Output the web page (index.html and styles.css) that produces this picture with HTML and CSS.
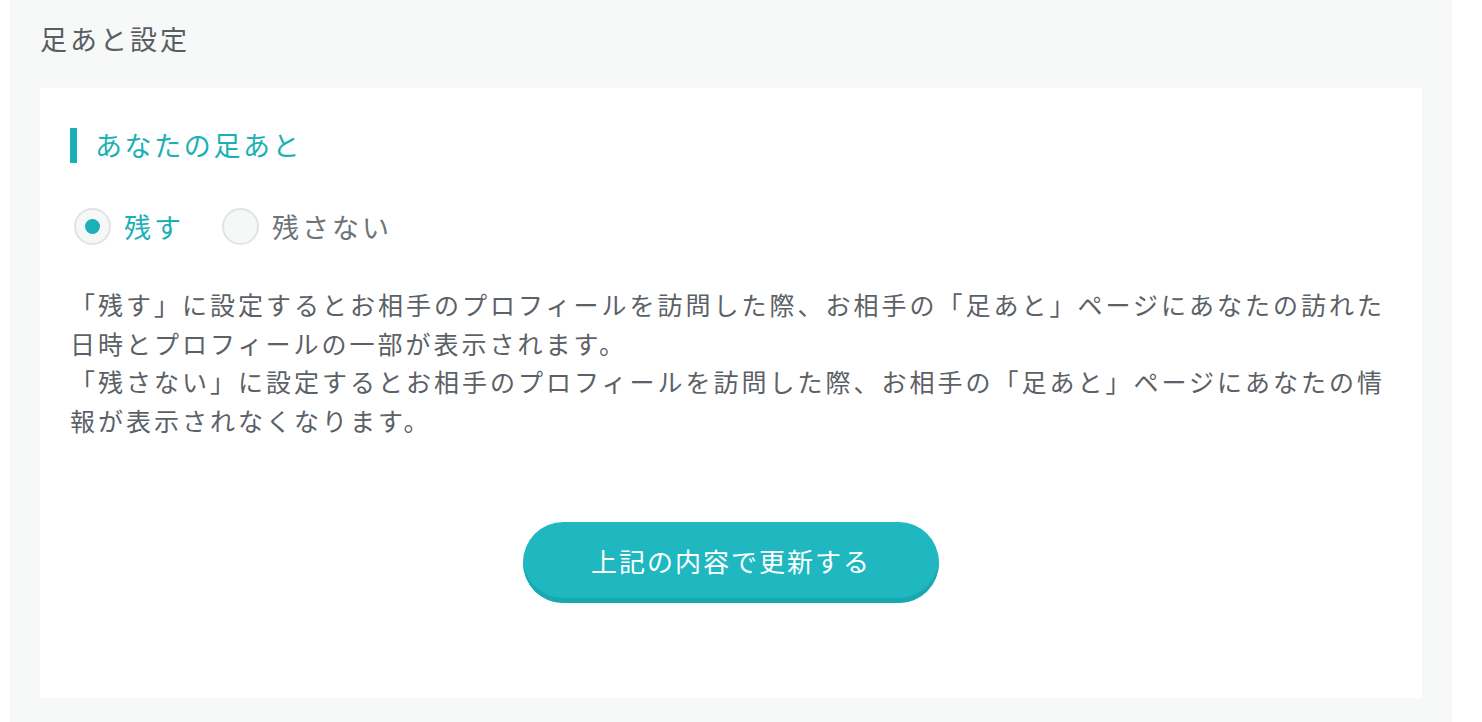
FILE: index.html
```html
<!DOCTYPE html>
<html lang="ja">
<head>
<meta charset="utf-8">
<link rel="stylesheet" href="styles.css">
</head>
<body>
<div class="panel">
  <h1 class="panel-title">足あと設定</h1>
  <div class="card">
    <h2 class="section-title">あなたの足あと</h2>
    <div class="radios">
      <label class="radio checked"><span class="radio-circle"><span class="radio-dot"></span></span><span class="radio-label">残す</span></label>
      <label class="radio"><span class="radio-circle"></span><span class="radio-label">残さない</span></label>
    </div>
    <p class="desc">「残す」に設定するとお相手のプロフィールを訪問した際、お相手の「足あと」ページにあなたの訪れた日時とプロフィールの一部が表示されます。<br>「残さない」に設定するとお相手のプロフィールを訪問した際、お相手の「足あと」ページにあなたの情報が表示されなくなります。</p>
    <div class="actions">
      <button class="submit">上記の内容で更新する</button>
    </div>
  </div>
</div>
</body>
</html>
```
FILE: styles.css
```css
html, body {
  margin: 0;
  padding: 0;
  background: #ffffff;
}
body {
  font-family: "Noto Sans CJK JP", "Noto Sans", sans-serif;
  color: #5b6166;
}
.panel {
  margin: 0 30px 0 10px;
  background: #f7f8f8;
  padding: 19px 30px 24px;
  height: 722px;
  box-sizing: border-box;
}
.panel-title {
  margin: 0;
  font-size: 27px;
  font-weight: 400;
  line-height: 40px;
  letter-spacing: 3px;
  color: #595e62;
}
.card {
  margin-top: 29px;
  background: #ffffff;
  height: 610px;
  box-sizing: border-box;
  padding: 40px 30px 0;
}
.section-title {
  margin: 0;
  border-left: 7px solid #1bafb8;
  padding-left: 18px;
  font-size: 27px;
  font-weight: 400;
  line-height: 33px;
  height: 35px;
  letter-spacing: 2.6px;
  color: #1bafb8;
}
.radios {
  display: flex;
  gap: 38px;
  margin-top: 45px;
  padding-left: 4px;
}
.radio {
  display: flex;
  align-items: center;
  gap: 13px;
}
.radio-circle {
  width: 37px;
  height: 37px;
  box-sizing: border-box;
  border: 2px solid #e2e4e4;
  border-radius: 50%;
  background: #f6f8f8;
  display: flex;
  align-items: center;
  justify-content: center;
}
.radio-dot {
  width: 15px;
  height: 15px;
  border-radius: 50%;
  background: #1bafb8;
}
.radio-label {
  font-size: 27px;
  letter-spacing: 3px;
  color: #6d7479;
  line-height: 35px;
}
.radio.checked .radio-label {
  color: #1bafb8;
}
.desc {
  margin: 40px 0 0;
  font-size: 25px;
  line-height: 38.5px;
  letter-spacing: 3px;
  color: #5b6166;
}
.actions {
  display: flex;
  justify-content: center;
  margin-top: 83px;
}
.submit {
  width: 416px;
  height: 81px;
  border: none;
  border-radius: 41px;
  background: #1fb8c0;
  box-shadow: inset 0 -5px 0 #19a8b0;
  color: #ffffff;
  font-family: "Noto Sans CJK JP", "Noto Sans", sans-serif;
  font-size: 26px;
  letter-spacing: 2px;
  padding: 0 0 4px;
}
```
